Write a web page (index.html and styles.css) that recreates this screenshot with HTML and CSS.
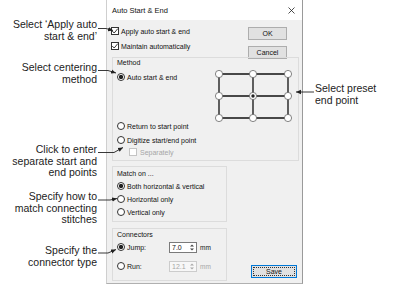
FILE: index.html
```html
<!DOCTYPE html>
<html>
<head>
<meta charset="utf-8">
<link rel="stylesheet" href="styles.css">
</head>
<body>
<div class="canvas">
  <div class="dialog">
    <div class="titlebar">
      <span class="title">Auto Start &amp; End</span>
      <svg class="close" width="7" height="7" viewBox="0 0 7 7"><path d="M0.5 0.5 L6.5 6.5 M6.5 0.5 L0.5 6.5" stroke="#222" stroke-width="0.8"/></svg>
    </div>
    <div class="body">
      <div class="toprow">
        <div class="checks">
          <div class="row"><span class="cb"><svg width="8" height="8" viewBox="0 0 8 8"><path d="M1.2 4 L3.2 6 L6.8 1.6" fill="none" stroke="#222" stroke-width="0.9"/></svg></span><span>Apply auto start &amp; end</span></div>
          <div class="row"><span class="cb"><svg width="8" height="8" viewBox="0 0 8 8"><path d="M1.2 4 L3.2 6 L6.8 1.6" fill="none" stroke="#222" stroke-width="0.9"/></svg></span><span>Maintain automatically</span></div>
        </div>
        <div class="buttons">
          <div class="btn">OK</div>
          <div class="btn">Cancel</div>
        </div>
      </div>

      <div class="group method">
        <div class="method-top">
          <div class="method-left">
            <div class="glabel">Method</div>
            <div class="row radio-row"><span class="radio on"></span><span>Auto start &amp; end</span></div>
          </div>
          <svg class="grid" width="79" height="52" viewBox="0 0 79 52">
            <g stroke="#111" stroke-width="1.3">
              <path d="M5 4 H74 M5 26 H74 M5 48 H74 M5 4 V48 M39 4 V48 M74 4 V48"/>
            </g>
            <g fill="#fff" stroke="#666" stroke-width="0.8">
              <circle cx="5" cy="4" r="3.6"/><circle cx="39" cy="4" r="3.6"/><circle cx="74" cy="4" r="3.6"/>
              <circle cx="5" cy="26" r="3.6"/><circle cx="39" cy="26" r="3.6"/><circle cx="74" cy="26" r="3.6"/>
              <circle cx="5" cy="48" r="3.6"/><circle cx="39" cy="48" r="3.6"/><circle cx="74" cy="48" r="3.6"/>
            </g>
            <circle cx="39" cy="26" r="1.7" fill="#222"/>
          </svg>
        </div>
        <div class="row radio-row r-return"><span class="radio"></span><span>Return to start point</span></div>
        <div class="row radio-row r-digit"><span class="radio"></span><span>Digitize start/end point</span></div>
        <div class="row sep-row"><span class="cb dis"></span><span class="disabled">Separately</span></div>
      </div>

      <div class="lower">
        <div class="lower-left">
          <div class="group match">
            <div class="glabel">Match on ...</div>
            <div class="row radio-row m1"><span class="radio on"></span><span>Both horizontal &amp; vertical</span></div>
            <div class="row radio-row m2"><span class="radio"></span><span>Horizontal only</span></div>
            <div class="row radio-row m2"><span class="radio"></span><span>Vertical only</span></div>
          </div>
          <div class="group conn">
            <div class="glabel">Connectors</div>
            <div class="row radio-row c1"><span class="radio on"></span><span class="clabel">Jump:</span>
              <span class="spin"><span class="val">7.0</span><span class="arrows"><svg width="6" height="9" viewBox="0 0 6 9"><path d="M1 3.5 L3 1.5 L5 3.5 Z M1 5.5 L3 7.5 L5 5.5 Z" fill="#444"/></svg></span></span>
              <span class="unit">mm</span></div>
            <div class="row radio-row c2"><span class="radio"></span><span class="clabel">Run:</span>
              <span class="spin dis"><span class="val">12.1</span><span class="arrows"><svg width="6" height="9" viewBox="0 0 6 9"><path d="M1 3.5 L3 1.5 L5 3.5 Z M1 5.5 L3 7.5 L5 5.5 Z" fill="#aaa"/></svg></span></span>
              <span class="unit disabled">mm</span></div>
          </div>
        </div>
        <div class="btn save"><span class="focus">Save</span></div>
      </div>
    </div>
  </div>

  <div class="callout left c-apply">Select ‘Apply auto<br>start &amp; end’</div>
  <div class="callout left c-center">Select centering<br>method</div>
  <div class="callout right c-preset">Select preset<br>end point</div>
  <div class="callout left c-click">Click to enter<br>separate start and<br>end points</div>
  <div class="callout left c-match">Specify how to<br>match connecting<br>stitches</div>
  <div class="callout left c-type">Specify the<br>connector type</div>

  <svg class="leaders" width="404" height="302" viewBox="0 0 404 302">
    <defs>
      <marker id="ah" markerWidth="6" markerHeight="6" refX="5" refY="3" orient="auto" markerUnits="userSpaceOnUse">
        <path d="M0 0.8 L5 3 L0 5.2 Z" fill="#222"/>
      </marker>
    </defs>
    <g stroke="#222" stroke-width="0.9" fill="none" marker-end="url(#ah)">
      <path d="M98 28.5 H106 L113 30.5"/>
      <path d="M98 70.5 H108 L116 73"/>
      <path d="M314 92 H296"/>
      <path d="M98 152.5 H114 L123 147.5"/>
      <path d="M98 200 H110 L117 198.5"/>
      <path d="M98 253 H108 L116 249.5"/>
    </g>
  </svg>
</div>
</body>
</html>
```
FILE: styles.css
```css
* { box-sizing: border-box; }
body {
  margin: 0;
  width: 404px;
  height: 302px;
  overflow: hidden;
  background: #fff;
  font-family: "Liberation Sans", Arial, sans-serif;
  color: #111;
}
.canvas {
  position: relative;
  width: 404px;
  height: 302px;
}
.dialog {
  margin-left: 106px;
  width: 197px;
  height: 284px;
  background: #f0f0f0;
  border-left: 1px solid #cfcfcf;
  border-right: 1px solid #9a9a9a;
  border-bottom: 1px solid #b0b0b0;
  font-size: 7px;
  display: flex;
  flex-direction: column;
}
.titlebar {
  height: 20px;
  background: #fff;
  display: flex;
  align-items: center;
  justify-content: space-between;
  padding: 1px 7px 0 5px;
}
.title { font-size: 7.5px; color: #111; }
.close { display: block; }
.body {
  padding: 5px 3px 0 5px;
  display: flex;
  flex-direction: column;
}
.toprow {
  height: 32px;
  display: flex;
  justify-content: space-between;
  align-items: flex-start;
}
.checks {
  display: flex;
  flex-direction: column;
  gap: 3px;
  margin-left: -1px;
}
.row {
  display: flex;
  align-items: center;
  height: 12px;
  gap: 2px;
  white-space: nowrap;
}
.cb {
  width: 8px;
  height: 8px;
  border: 1px solid #333;
  background: #fff;
  display: flex;
  align-items: center;
  justify-content: center;
  flex: none;
}
.cb svg { display: block; margin: -1px; }
.cb.dis { border-color: #c4c4c4; }
.disabled { color: #a6a6a6; }
.buttons {
  display: flex;
  flex-direction: column;
  gap: 6px;
  margin-top: 2px;
  margin-right: 12px;
}
.btn {
  width: 39px;
  height: 13px;
  background: #e1e1e1;
  border: 1px solid #adadad;
  display: flex;
  align-items: center;
  justify-content: center;
  font-size: 7px;
}
.group {
  border: 1px solid #dcdcdc;
}
.glabel {
  height: 9px;
  line-height: 9px;
  padding-left: 2px;
}
.method {
  padding: 0 5px 2px 4px;
}
.method .glabel { margin-left: -2px; }
.method-top {
  display: flex;
  justify-content: space-between;
  align-items: flex-start;
}
.radio-row { gap: 2px; }
.method-left .radio-row { margin-top: 4px; }
.grid { display: block; margin-top: 12px; }
.radio {
  width: 8px;
  height: 8px;
  border-radius: 50%;
  border: 1px solid #333;
  background: #fff;
  flex: none;
}
.radio.on {
  background: radial-gradient(circle, #222 0 1.9px, #fff 2.4px);
}
.r-return { margin-top: -2px; }
.r-digit { margin-top: 2px; }
.sep-row { margin-left: 12px; gap: 3px; }
.lower {
  margin-top: 5px;
  display: flex;
  justify-content: space-between;
  align-items: flex-end;
}
.lower-left {
  width: 115px;
  display: flex;
  flex-direction: column;
  gap: 6px;
}
.match {
  padding: 2px 0 3px 4px;
}
.match .glabel, .conn .glabel { margin-left: -2px; }
.m1 { margin-top: 2px; }
.m2 { margin-top: 1px; }
.conn {
  padding: 1px 0 7px 4px;
}
.c1 { height: 14px; margin-top: 1px; }
.c2 { height: 14px; margin-top: 5px; }
.clabel { width: 40px; }
.spin {
  width: 28px;
  height: 11px;
  border: 1px solid #7a7a7a;
  background: #fff;
  display: flex;
  align-items: center;
  justify-content: space-between;
  padding-left: 2px;
}
.spin.dis { border-color: #cccccc; background: #f7f7f7; color: #a6a6a6; }
.arrows {
  width: 9px;
  height: 9px;
  display: flex;
  align-items: center;
  justify-content: center;
}
.arrows svg { display: block; }
.unit { margin-left: 1px; font-size: 6.5px; }
.save {
  width: 46px;
  height: 13px;
  margin-right: 2px;
  margin-bottom: 3px;
  border: 1px solid #0078d7;
  padding: 1px;
}
.focus {
  width: 100%;
  height: 100%;
  border: 1px dotted #333;
  display: flex;
  align-items: center;
  justify-content: center;
}
.callout {
  position: absolute;
  font-size: 10.5px;
  line-height: 11.5px;
  color: #222;
  white-space: nowrap;
}
.callout.left { right: 307px; text-align: right; }
.callout.right { left: 315px; text-align: left; }
.c-apply { top: 19px; }
.c-center { top: 62px; }
.c-preset { top: 83px; }
.c-click { top: 144px; }
.c-match { top: 191px; }
.c-type { top: 245px; }
.leaders {
  position: absolute;
  left: 0;
  top: 0;
  pointer-events: none;
}
```
